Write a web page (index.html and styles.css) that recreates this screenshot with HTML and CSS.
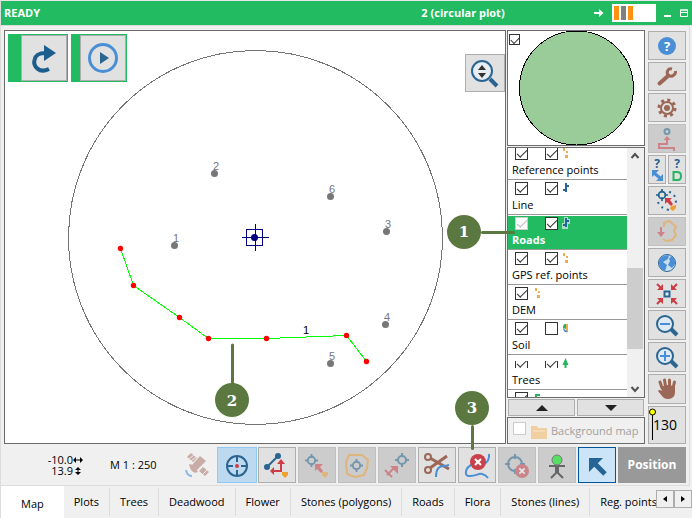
FILE: index.html
```html
<!DOCTYPE html>
<html lang="en">
<head>
<meta charset="utf-8">
<title>Field map – READY</title>
<link rel="stylesheet" href="styles.css">
</head>
<body>
<svg class="defs" aria-hidden="true">
  <symbol id="target" viewBox="0 0 14 14">
    <circle cx="7" cy="7" r="4" fill="none" stroke="#1f6391" stroke-width="2"/>
    <path d="M7 0v4M7 10v4M0 7h4M10 7h4" stroke="#1f6391" stroke-width="2"/>
  </symbol>
  <symbol id="lens" viewBox="0 0 36 28">
    <path d="M22 18l6 6" stroke="#2a6592" stroke-width="4"/>
    <circle cx="16" cy="13" r="8" fill="#dfeaf4" stroke="#2a6592" stroke-width="2"/>
  </symbol>
  <symbol id="points" viewBox="0 0 8 12">
    <path d="M1 1h2v3h-2zM4 4h2v2h-2zM3 8h3v3h-3z" fill="#efab50"/>
  </symbol>
  <symbol id="lines" viewBox="0 0 8 12">
    <path d="M4 1v9M4 4h3M1 8h3" fill="none" stroke="#246596" stroke-width="2"/>
  </symbol>
  <symbol id="xmark" viewBox="0 0 16 16">
    <circle cx="8" cy="8" r="8" fill="#c9404a"/><path d="M5 5l6 6M11 5l-6 6" stroke="#fff" stroke-width="2"/>
  </symbol>
</svg>

<div class="app">
  <header class="titlebar">
    <strong class="status">READY</strong>
    <strong class="plot">2 (circular plot)</strong>
    <div class="window-tools">
      <svg class="arrow" viewBox="0 0 10 8"><path d="M0 4h7" stroke="#fff" stroke-width="2"/><path d="M5 0l4.500 4l-4.500 4z" fill="#fff"/></svg>
      <div class="battery"><i></i><i class="dark"></i><i></i></div>
      <svg class="win" viewBox="0 0 8 8"><path d="M0 7h7" stroke="#fff" stroke-width="2"/></svg>
      <svg class="win" viewBox="0 0 8 8"><path d="M.5 1h7v6.500h-7z M0 3.500h8M0 1h8" fill="none" stroke="#fff"/></svg>
    </div>
  </header>

  <main class="frame">
    <div class="workspace">
      <section class="map" aria-label="Map">
        <svg class="canvas" viewBox="5 31 500 412">
          <circle cx="255.500" cy="237.500" r="187" fill="none" stroke="#747474" shape-rendering="crispEdges"/>
          <g fill="#777">
            <circle cx="214.500" cy="173.500" r="3.500"/><circle cx="330.500" cy="196.500" r="3.500"/><circle cx="386.500" cy="231.500" r="3.500"/>
            <circle cx="174.500" cy="245.500" r="3.500"/><circle cx="385.500" cy="324.500" r="3.500"/><circle cx="330.500" cy="363.500" r="3.500"/>
          </g>
          <g class="labels">
            <text x="213" y="170">2</text><text x="329" y="193">6</text><text x="385" y="228">3</text>
            <text x="173" y="242">1</text><text x="384" y="321">4</text><text x="329" y="360">5</text>
            <text class="road" x="303" y="334">1</text>
          </g>
          <g fill="none" stroke="#000080" shape-rendering="crispEdges">
            <path d="M246.500 229.500h16v16h-16zM255.500 224v27M242 237.500h27"/>
          </g>
          <circle cx="254.500" cy="237.500" r="3.500" fill="#000080"/>
          <polyline points="120.500,248.500 133.500,285.500 179.500,317.500 208.500,338.500 266.500,338.500 346.500,335.500 366.500,361.500" fill="none" stroke="#0f0" shape-rendering="crispEdges"/>
          <g fill="#f00">
            <circle cx="120.500" cy="248.500" r="2.700"/><circle cx="133.500" cy="285.500" r="2.700"/><circle cx="179.500" cy="317.500" r="2.700"/><circle cx="208.500" cy="338.500" r="2.700"/><circle cx="266.500" cy="338.500" r="2.700"/><circle cx="346.500" cy="335.500" r="2.700"/><circle cx="366.500" cy="361.500" r="2.700"/>
          </g>
          <path d="M232.500 345v40" stroke="#5c7841" stroke-width="3" stroke-linecap="round"/>
          <circle cx="232" cy="400" r="17" fill="#5c7841"/>
          <text class="callout-text" x="232" y="406">2</text>
        </svg>
        <div class="quick">
          <div class="quick-item wide"><button aria-label="Redo"><svg viewBox="0 0 44 44"><path d="M27 33C17 38 11 30 12.500 24C13.500 18 18 17 24 17" fill="none" stroke="#1b5d8d" stroke-width="4"/><path d="M22 9l12 8l-12 8z" fill="#1b5d8d"/></svg></button></div>
          <div class="quick-item"><button aria-label="Start"><svg viewBox="0 0 44 44"><circle cx="22" cy="22" r="13.500" fill="none" stroke="#4a8fd6" stroke-width="3"/><path d="M19 16l9 6l-9 6z" fill="#2a6592"/></svg></button></div>
        </div>
        <button class="fit" aria-label="Zoom"><svg viewBox="0 0 38 36"><path d="M24 24l7 7" stroke="#2a6592" stroke-width="4"/><circle cx="16" cy="16" r="10" fill="#e6eef4" stroke="#2a6592" stroke-width="2"/><path d="M12 15l4-5l4 5zM12 18l4 5l4-5z" fill="#333"/></svg></button>
      </section>

      <aside class="panel">
        <div class="preview">
          <input type="checkbox" checked aria-label="Show overview">
          <svg viewBox="0 0 136 114"><circle cx="68.500" cy="57" r="57" fill="#99cc99" stroke="#000" shape-rendering="crispEdges"/></svg>
        </div>
        <div class="layers">
          <div class="layer-view"><ul>
            <li><div><input type="checkbox" checked aria-label="Show"><input type="checkbox" checked aria-label="Labels"><svg><use href="#points"/></svg></div><span>Reference points</span></li>
            <li><div><input type="checkbox" checked aria-label="Show"><input type="checkbox" checked aria-label="Labels"><svg><use href="#lines"/></svg></div><span>Line</span></li>
            <li class="selected"><div><input type="checkbox" checked disabled aria-label="Show"><input type="checkbox" checked aria-label="Labels"><svg viewBox="0 0 8 12"><path d="M2 0h4v2h2v5h-2v5h-6v-6h2z" fill="#a9dcc9"/><use href="#lines"/></svg></div><span>Roads</span></li>
            <li><div><input type="checkbox" checked aria-label="Show"><input type="checkbox" checked aria-label="Labels"><svg><use href="#points"/></svg></div><span>GPS ref. points</span></li>
            <li><div><input type="checkbox" checked aria-label="Show"><svg><use href="#points"/></svg></div><span>DEM</span></li>
            <li><div><input type="checkbox" checked aria-label="Show"><input type="checkbox" aria-label="Labels"><svg viewBox="0 0 8 12"><path d="M4 2C1 2 1 4 1 6l3 1z" fill="#28b463"/><path d="M4 2h2v8h-2z" fill="#efab50"/><path d="M1 6c0 3 2 5 5 4z" fill="#4a90d9"/></svg></div><span>Soil</span></li>
            <li class="partial"><div><input type="checkbox" checked aria-label="Show"><input type="checkbox" checked aria-label="Labels"><svg viewBox="0 0 8 12"><path d="M3.500 1l3 7h-2v3h-2v-3h-2z" fill="#28b463"/></svg></div><span>Trees</span></li>
            <li><div><input type="checkbox" checked aria-label="Show"><svg viewBox="0 0 8 12"><path d="M6 3H2v3h4v3H1" fill="none" stroke="#28b463" stroke-width="2"/></svg></div></li>
          </ul></div>
          <div class="scroll">
            <svg viewBox="0 0 15 16"><path d="M4 10l3.500-4l3.500 4" fill="none" stroke="#505050" stroke-width="2"/></svg>
            <div class="thumb"></div>
            <svg viewBox="0 0 15 16"><path d="M4 6l3.500 4l3.500-4" fill="none" stroke="#505050" stroke-width="2"/></svg>
          </div>
        </div>
        <div class="order">
          <button aria-label="Move up"><svg viewBox="0 0 12 6"><path d="M0 6l6-6l6 6z" fill="#222"/></svg></button>
          <button aria-label="Move down"><svg viewBox="0 0 12 6"><path d="M0 0h12l-6 6z" fill="#222"/></svg></button>
        </div>
        <label class="background"><input type="checkbox" disabled><svg viewBox="0 0 16 14"><path d="M0 1h6l1 2h9v11h-16z" fill="#f0cfa0"/><path d="M2 6h12" stroke="#f7e6cf"/></svg><span>Background map</span></label>
        <div class="callout row-callout"><b>1</b><i></i></div>
      </aside>

      <nav class="side" aria-label="Map tools">
        <button aria-label="Help"><svg viewBox="0 0 36 27"><circle cx="18" cy="14" r="9" fill="#4a8fd6"/><text class="q white" x="18" y="19">?</text></svg></button>
        <button aria-label="Settings"><svg viewBox="0 0 36 27"><path d="M10.500 20.500l9-8" stroke="#9b6756" stroke-width="4" stroke-linecap="round"/><path d="M23 6c-4-1-6 3-4 6c3 3 8 0 7.500-4" fill="none" stroke="#9b6756" stroke-width="3"/></svg></button>
        <button aria-label="Options"><svg viewBox="0 0 36 27"><circle cx="18" cy="14" r="8" fill="none" stroke="#9b6756" stroke-width="3" stroke-dasharray="3 3.280"/><circle cx="18" cy="14" r="6" fill="none" stroke="#9b6756" stroke-width="2"/><circle cx="18" cy="14" r="3" fill="#9b6756"/></svg></button>
        <button disabled aria-label="Snap"><svg viewBox="0 0 36 27"><circle cx="18" cy="6.500" r="2.500" fill="none" stroke="#1f6391" stroke-width="2"/><path d="M18 13v6H10v4h15v3" fill="none" stroke="#d03c46" stroke-width="2"/><path d="M14.500 15l3.500-4l3.500 4z" fill="#d03c46"/></svg></button>
        <div class="split">
          <button aria-label="Query extent"><svg viewBox="0 0 16 27"><text class="q" x="8" y="12">?</text><path d="M5 17l6 5" stroke="#4a8fd6" stroke-width="3"/><path d="M3 14h7l-7 7zM14 25h-7l7-7z" fill="#4a8fd6"/></svg></button>
          <button aria-label="Query data"><svg viewBox="0 0 16 27"><text class="q" x="8" y="12">?</text><path d="M4.500 16h3.500q4 0 4 4t-3 4h-4.500z" fill="none" stroke="#28b463" stroke-width="2"/></svg></button>
        </div>
        <button aria-label="Navigate"><svg viewBox="0 0 36 27"><use href="#target" x="7" y="2" width="12" height="12"/><path d="M20 5q7 1 7 12M9 15q2 6 11 8" fill="none" stroke="#2a6592" stroke-width="2" stroke-dasharray="2 4"/><path d="M16 11h7l-2 2l3 4l-2 2l-4-4l-2 2z" fill="#d03c46"/><path d="M22 19l5-1v3l-3 3l-3-2z" fill="#f0a030"/></svg></button>
        <button disabled aria-label="Load polygon"><svg viewBox="0 0 36 27"><path d="M15 9v-4l5-2l4 3l3 3l-2 4l2 4l-4 5l-6 1l-3-2" fill="none" stroke="#f0a030" stroke-width="2"/><path d="M12 9v7" stroke="#d03c46" stroke-width="2"/><path d="M8 14h8l-4 5z" fill="#d03c46"/></svg></button>
        <button aria-label="World"><svg viewBox="0 0 36 27"><circle cx="18" cy="14" r="8.500" fill="#c9dff0" stroke="#2a6592"/><path d="M10 12q2-6 10-6l-1 4l-5 3l4 3l-2 6q-6-2-6-8zM22 7q5 2 4 8l-3 4l-4-3l2-4l-1-2z" fill="#4a8fd6"/></svg></button>
        <button aria-label="Centre"><svg viewBox="0 0 36 27"><path d="M15.500 11.500h5v5h-5z" fill="#dfeaf4" stroke="#2a6592" stroke-width="2"/><path d="M8 4l5 5M28 4l-5 5M8 24l5-5M28 24l-5-5" stroke="#d03c46" stroke-width="2"/><path d="M14 4v6H8zM22 4v6h6zM14 24v-6H8zM22 24v-6h6z" fill="#d03c46"/></svg></button>
        <button class="tall" aria-label="Zoom out"><svg viewBox="0 0 36 28"><use href="#lens" width="36" height="28"/><path d="M11 13h10" stroke="#4a8fd6" stroke-width="2"/></svg></button>
        <button class="tall" aria-label="Zoom in"><svg viewBox="0 0 36 28"><use href="#lens" width="36" height="28"/><path d="M11 13h10M16 8v10" stroke="#4a8fd6" stroke-width="2"/></svg></button>
        <button class="tall" aria-label="Pan"><svg viewBox="0 0 36 28"><path d="M13 13l-2-6M16.500 11l-1-6M20.500 11l0-6M24 13l1.500-6" stroke="#9b6756" stroke-width="3" stroke-linecap="round"/><path d="M12 12q7-4 14 0v5q0 7-7 7q-4 0-6-3l-4-5q1-2 4 0z" fill="#9b6756"/></svg></button>
        <button class="height" aria-label="Height 130"><svg viewBox="0 0 36 34"><path d="M3.500 4v28" stroke="#000"/><circle cx="3.500" cy="4" r="3" fill="#ff0" stroke="#000"/><text class="number" x="4" y="22">130</text></svg></button>
      </nav>
    </div>

    <div class="toolbar">
      <div class="coords"><span>-10.0<svg viewBox="0 0 10 8"><path d="M2 4h6" stroke="#000"/><path d="M0 4l3-3v6zM10 4l-3-3v6z"/></svg></span><span>13.9<svg viewBox="0 0 10 8"><path d="M5 1v6" stroke="#000"/><path d="M2 3l3-3l3 3zM2 5h6l-3 3z"/></svg></span></div>
      <div class="scale">M 1 : 250</div>
      <svg class="satellite" viewBox="0 0 28 28"><g fill="#c8aca5"><path d="M8 2l6 5l-4 4l-6-5zM20 16l6 5l-4 4l-6-5z"/><path d="M17 5l6 5l-9 9l-5-5z"/><path d="M6 13q5 0 9 8q-7 3-9-8z"/></g><path d="M3 19q1 6 6 6" fill="none" stroke="#8fbbe6" stroke-width="2"/><path d="M6 8l5-4M19 24l5-5M8 10l5-4" stroke="#eee" stroke-width="1"/></svg>
      <div class="tools">
        <button class="active" aria-label="Locate"><svg viewBox="0 0 36 34"><circle cx="18" cy="18" r="10" fill="none" stroke="#2a6592" stroke-width="2"/><path d="M18 8v6M18 22v6M8 18h6M22 18h6" stroke="#2a6592" stroke-width="2"/><circle cx="18" cy="18" r="2" fill="#d03c46"/></svg></button>
        <button aria-label="Move vertex"><svg viewBox="0 0 36 34"><path d="M8 19l11-11" stroke="#2a6592" stroke-width="2"/><circle cx="8" cy="19" r="3" fill="#2a6592"/><circle cx="19" cy="8" r="3" fill="#2a6592"/><path d="M22 15v8h-8" fill="none" stroke="#d03c46" stroke-width="2"/><path d="M18 16l4-5l4 5zM15 19v8l-4-4z" fill="#d03c46"/><path d="M23 24h6v3l-3 3l-3-3z" fill="#f0a030"/></svg></button>
        <button disabled aria-label="Move to point"><svg viewBox="0 0 36 34"><use href="#target" x="6" y="6" width="13" height="13"/><path d="M16 16h8l-3 3l3 4l-2 2l-4-4l-2 2z" fill="#d03c46"/><path d="M23 24h6v3l-3 3l-3-3z" fill="#f0a030"/></svg></button>
        <button disabled aria-label="Trace polygon"><svg viewBox="0 0 36 34"><path d="M7 14l3-7h13l6 5l-1 8l-3 7l-9 2l-8-3z" fill="none" stroke="#f0a030" stroke-width="2" stroke-linejoin="round"/><use href="#target" x="11" y="11" width="13" height="13"/></svg></button>
        <button disabled aria-label="Measure"><svg viewBox="0 0 36 34"><use href="#target" x="16" y="5" width="14" height="14"/><path d="M8 27l8-8M6 22l7 7" stroke="#d03c46" stroke-width="2"/><path d="M11 18h8v8z" fill="#d03c46"/></svg></button>
        <button aria-label="Cut line"><svg viewBox="0 0 36 34"><path d="M11 10l19 11M11 20l17-12" stroke="#9b6756" stroke-width="3"/><circle cx="9" cy="9" r="3" fill="none" stroke="#9b6756" stroke-width="2"/><circle cx="9" cy="22" r="3" fill="none" stroke="#9b6756" stroke-width="2"/><path d="M17 29q0-12 9-11l4-1" fill="none" stroke="#4a8fd6" stroke-width="2"/></svg></button>
        <button class="has-callout" aria-label="Delete line"><svg viewBox="0 0 36 34"><path d="M30 6q1 7-6 11t-10-1c-9 4-9 13-3 12c7 0 8-3 12-2q4 1 6 4" fill="none" stroke="#4a8fd6" stroke-width="2"/><use href="#xmark" x="11" y="6" width="16" height="16"/></svg><span class="callout tool-callout"><b>3</b><i></i></span></button>
        <button disabled aria-label="Delete point"><svg viewBox="0 0 36 34"><circle cx="16" cy="16" r="7" fill="none" stroke="#1f6391" stroke-width="2"/><path d="M16 6v5M16 21v5M6 16h5M21 16h5" stroke="#1f6391" stroke-width="2"/><use href="#xmark" x="16" y="16" width="14" height="14"/></svg></button>
        <button class="muted" aria-label="Person"><svg viewBox="0 0 36 34"><path d="M10 18h16M18 17v8M18 24l-6 6M18 24l6 6" fill="none" stroke="#666" stroke-width="2"/><path d="M16 18h4v7h-4z" fill="#666"/><circle cx="18" cy="12" r="5" fill="#55df63" stroke="#777"/></svg></button>
        <button class="chosen" aria-label="Select"><svg viewBox="0 0 36 34"><path d="M15 15l11 11" stroke="#246596" stroke-width="5"/><path d="M10 10h14l-14 14z" fill="#246596"/></svg></button>
        <button class="position">Position</button>
      </div>
    </div>
  </main>

  <footer class="tabs">
    <nav><a class="current" href="#map">Map</a><a href="#plots">Plots</a><a href="#trees">Trees</a><a href="#deadwood">Deadwood</a><a href="#flower">Flower</a><a href="#polygons">Stones (polygons)</a><a href="#roads">Roads</a><a href="#flora">Flora</a><a href="#stone-lines">Stones (lines)</a><a href="#reg">Reg. points</a></nav>
    <div class="pager"><button aria-label="Previous tabs"><svg viewBox="0 0 4 6"><path d="M4 0v6l-4-3z"/></svg></button><button aria-label="Next tabs"><svg viewBox="0 0 4 6"><path d="M0 0l4 3l-4 3z"/></svg></button></div>
  </footer>
</div>
</body>
</html>
```
FILE: styles.css
```css
* { box-sizing: border-box; }
body { margin: 0; background: #f0f0f0; color: #000; font: 11px/16px "Open Sans", "Noto Sans", sans-serif; }
button { margin: 0; padding: 0; border: 1px solid #adadad; background: #e1e1e1; font: inherit; display: flex; align-items: center; justify-content: center; }
button:disabled, button.muted { background: #ccc; border-color: #bfbfbf; }
button:disabled svg { opacity: .5; }
svg { display: block; }
.defs { position: absolute; width: 0; height: 0; }

.app { display: flex; flex-direction: column; height: 100vh; border-left: 1px solid #dcdcdc; border-top: 1px solid #e8e8e8; }
.titlebar { display: grid; grid-template-columns: 1fr auto 1fr; align-items: center; height: 24px; flex: none; padding: 0 4px 0 3px; background: #22bb62; color: #fff; }
.plot { grid-column: 2; margin-left: 234px; }
.window-tools { display: flex; align-items: center; justify-content: flex-end; gap: 8px; }
.arrow { width: 10px; height: 8px; }
.battery { display: flex; gap: 2px; width: 44px; height: 18px; padding: 2px; background: #fff; }
.battery i { width: 5px; background: #ff9210; }
.battery .dark { background: #808080; }
.win { width: 8px; height: 8px; }

.frame { display: flex; flex-direction: column; flex: 1; min-height: 0; margin-right: 2px; padding: 4px 3px 1px 3px; border: 1px solid #dcdcdc; border-left: 0; }
.workspace { display: flex; flex: 1; min-height: 0; }
.map { position: relative; flex: 1; min-width: 0; border: 1px solid #6b6b6b; background: #fff; }
.canvas { width: 100%; height: 100%; }
.labels { font: 11px "Liberation Sans", sans-serif; fill: #777; }
.labels .road { fill: #000; }
.callout-text { font: bold 15px "DejaVu Serif", serif; fill: #fff; text-anchor: middle; }
.quick { position: absolute; left: 3px; top: 3px; display: flex; gap: 3px; }
.quick-item { padding: 1px 1px 1px 9px; background: #22bb62; }
.quick-item.wide { padding-left: 13px; }
.quick button { width: 46px; height: 46px; }
.quick svg { width: 44px; height: 44px; }
.fit { position: absolute; right: 0; top: 23px; width: 40px; height: 38px; }
.fit svg { width: 38px; height: 36px; }

.panel { position: relative; display: flex; flex-direction: column; width: 138px; margin-left: 1px; }
.preview { position: relative; height: 116px; border: 1px solid #6b6b6b; background: #fff; }
.preview svg { width: 100%; height: 100%; overflow: hidden; }
input[type="checkbox"] { appearance: none; flex: none; width: 13px; height: 13px; margin: 0; border: 1px solid #333; background: #fff; }
input[type="checkbox"]:checked::before { content: ""; display: block; width: 9px; height: 4px; margin: 2px 1px; border: solid #333; border-width: 0 0 1px 1px; transform: rotate(-45deg); }
.preview input[type="checkbox"] { position: absolute; left: 1px; top: 3px; width: 11px; height: 11px; }
.preview input[type="checkbox"]:checked::before { width: 7px; }
input[type="checkbox"]:disabled { border-color: #ccc; }
input[type="checkbox"]:disabled::before { border-color: #bbb; }

.layers { display: flex; flex: 1; min-height: 0; margin-top: 1px; border: 1px solid #6b6b6b; background: #fff; }
.layer-view { flex: 1; overflow: hidden; }
.layers ul { list-style: none; margin: -3px 0 0; padding: 0; }
.layers li { height: 35px; padding: 2px 4px 0; border-bottom: 1px solid #999; white-space: nowrap; }
.layers li div { display: flex; gap: 17px; height: 15px; padding-left: 3px; }
.layers li div input + svg { margin-left: -13px; }
.layers li div input:first-child + svg { margin-left: -11px; }
.layers li svg { width: 8px; height: 12px; }
.layers span { display: block; }
.layers .selected { background: #22bb62; background-clip: padding-box; border-top: 1px solid #fff; padding-top: 1px; color: #fff; font-weight: bold; }
.partial input { clip-path: inset(4px 0 2px 0); }
.scroll { display: flex; flex-direction: column; width: 17px; padding-right: 1px; background: #f0f0f0; }
.scroll svg { width: 16px; height: 16px; }
.thumb { flex: 1; margin: 104px 0 32px; background: #cdcdcd; }
.order { display: flex; gap: 2px; margin: 1px 1px; }
.order button { flex: 1; height: 17px; }
.order svg { width: 12px; height: 6px; }
.background { display: flex; align-items: center; height: 27px; padding-left: 5px; border: 1px solid #6b6b6b; color: #a0a0a0; white-space: nowrap; }
.background svg { width: 16px; height: 14px; margin: 2px 4px 0 5px; }
.background input { margin-bottom: 4px; }

.callout { position: absolute; display: flex; align-items: center; color: #fff; }
.callout b { width: 34px; height: 34px; border-radius: 50%; background: #5c7841; font: bold 15px/34px "DejaVu Serif", serif; text-align: center; }
.callout i { background: #5c7841; border-radius: 2px; }
.row-callout { left: -60px; top: 185px; }
.row-callout i { width: 34px; height: 3px; }
.tool-callout { flex-direction: column; left: -4px; bottom: 32px; }
.tool-callout i { width: 3px; height: 25px; }
.has-callout { position: relative; }

.side { display: flex; flex-direction: column; gap: 2px; width: 38px; margin-left: 3px; padding-top: 1px; }
.side button { height: 29px; flex: none; }
.side .tall { height: 30px; }
.side .height { flex: 1; }
.side svg { width: 36px; height: 27px; }
.side .tall svg { height: 28px; }
.side .height svg { height: 34px; }
.split { display: flex; gap: 2px; }
.side .split button { flex: 1; }
.side .split svg { width: 16px; }
.q { font: bold 13px "Open Sans", sans-serif; fill: #1f6391; text-anchor: middle; }
.q.white { fill: #fff; }
.split .q { font-size: 12px; }
.number { font: 14px "Open Sans", sans-serif; }

.toolbar { display: flex; align-items: center; height: 40px; flex: none; padding-top: 2px; }
.coords { display: flex; flex-direction: column; align-items: flex-end; width: 79px; line-height: 11px; }
.coords span { display: flex; align-items: center; }
.coords svg { width: 10px; height: 8px; }
.scale { margin-left: 27px; }
.satellite { width: 28px; height: 28px; margin-left: auto; margin-right: 6px; }
.tools { display: flex; gap: 2px; }
.tools button { width: 38px; height: 36px; }
.tools svg { width: 36px; height: 34px; }
.tools .active { width: 40px; margin-right: -1px; border-color: #90c8f6; background: #bdd9f0; }
.tools .chosen { border-color: #005499; background: #cce4f7; }
.tools .position { width: 68px; border: 0; background: #999; color: #fff; font-size: 12px; font-weight: bold; }

.tabs { display: flex; height: 32px; flex: none; }
.tabs nav { display: flex; flex: 1; min-width: 0; overflow: hidden; padding-top: 2px; }
.tabs a { flex: none; height: 28px; padding: 6px 10px 0; border-right: 1px solid #dcdcdc; color: #000; text-decoration: none; white-space: nowrap; }
.tabs .current { height: 32px; margin-top: -2px; padding: 10px 20px 0; background: #fff; border: 0; }
.pager { display: flex; padding-top: 4px; }
.pager button { width: 18px; height: 18px; background: #f0f0f0; }
.pager svg { width: 4px; height: 6px; }
```
